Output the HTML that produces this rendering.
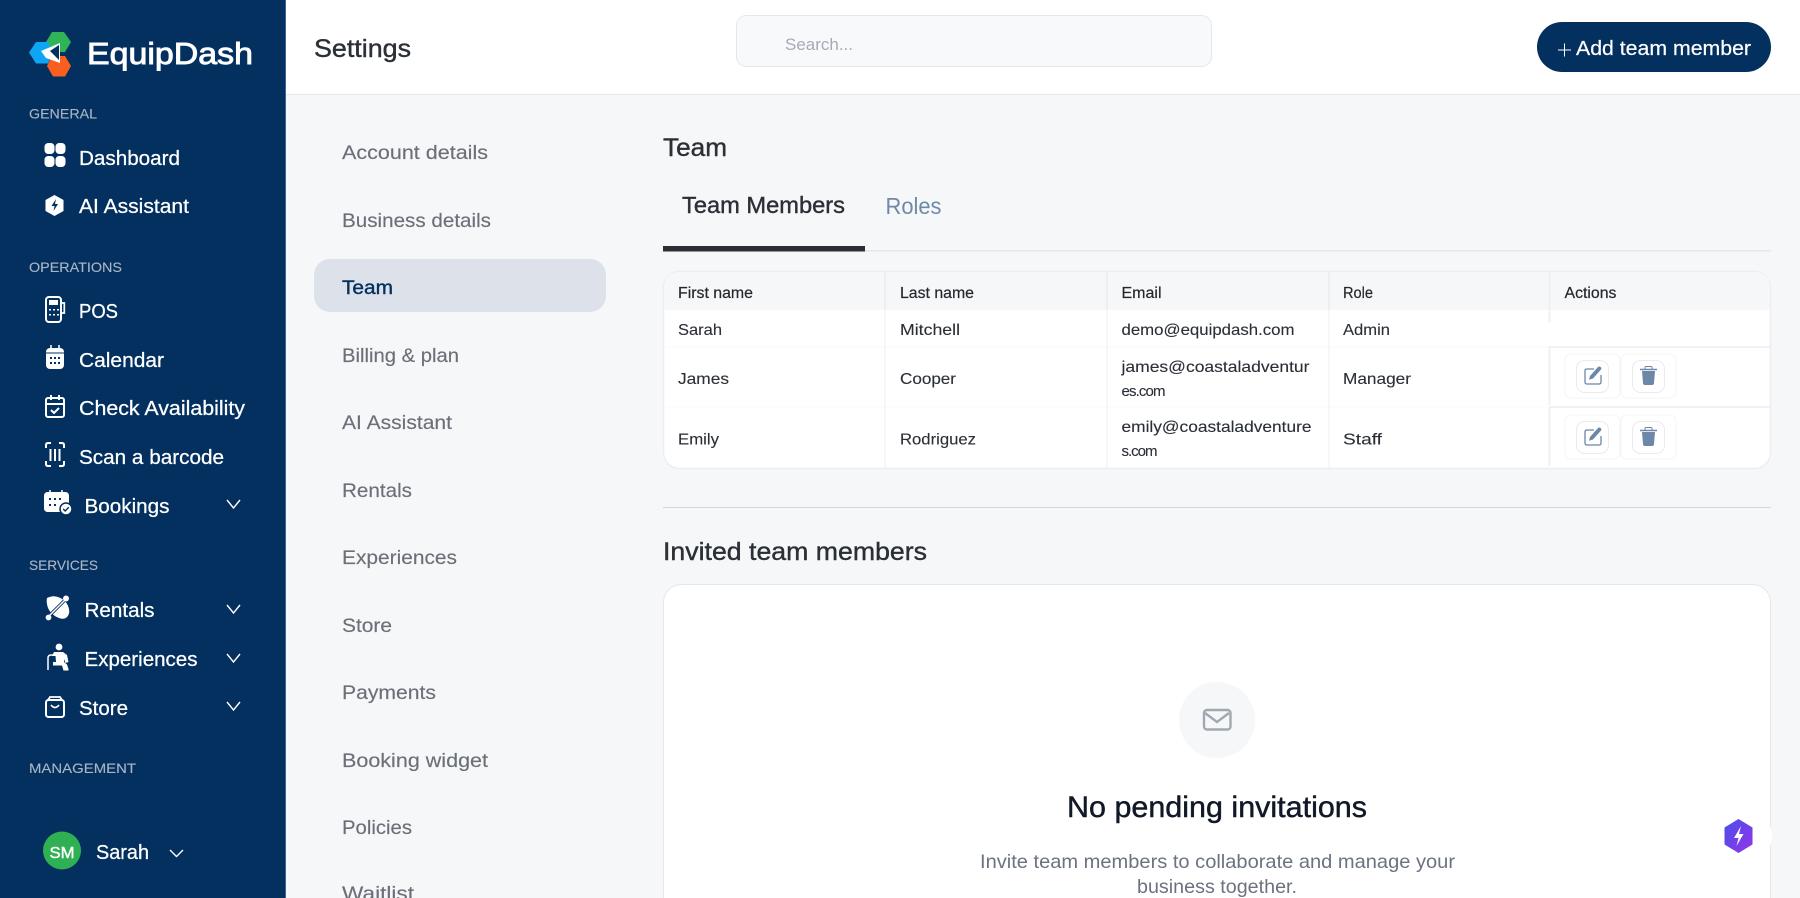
<!DOCTYPE html>
<html><head><meta charset="utf-8"><title>Settings - Team</title>
<style>
html,body{margin:0;padding:0;width:1800px;height:898px;overflow:hidden;background:#f6f7f9}
svg{display:block}
text{font-family:"Liberation Sans",Arial,sans-serif;white-space:pre}
.nav{font-size:20px;fill:#fff;stroke:#fff;stroke-width:.25}
.sec{font-size:14px;fill:#aab6c6;stroke:#aab6c6;stroke-width:.12}
.menu{font-size:19.5px;fill:#6b7078;stroke:#6b7078;stroke-width:.15}
.h{font-size:25px;fill:#2b2f36;stroke:#2b2f36;stroke-width:.4}
.th{font-size:15.5px;fill:#25282e;stroke:#25282e;stroke-width:.2}
.td{font-size:16px;fill:#2b2f36;stroke:#2b2f36;stroke-width:.12}
</style></head><body>
<svg width="1800" height="898" viewBox="0 0 1800 898" xmlns="http://www.w3.org/2000/svg">
<defs><linearGradient id="g" x1="0" y1="0" x2="1" y2="1"><stop offset="0" stop-color="#4a50ea"/><stop offset="1" stop-color="#9333ea"/></linearGradient></defs>
<rect width="1800" height="898" fill="#f6f7f9"/>
<!-- header -->
<rect x="285" width="1515" height="94" fill="#fff"/>
<rect x="285" y="94" width="1515" height="1" fill="#e5e7eb"/>
<text class="h" x="314" y="57" textLength="97" lengthAdjust="spacingAndGlyphs">Settings</text>
<rect x="736.500" y="15.500" width="475" height="51" rx="10" fill="#f8f9fb" stroke="#e5e7eb"/>
<text x="785" y="50" font-size="16.500" fill="#a5abb5" textLength="68" lengthAdjust="spacingAndGlyphs">Search...</text>
<rect x="1537" y="22" width="234" height="50" rx="25" fill="#03305f"/>
<path d="M1558 50h13M1564.500 43.500v13" stroke="#fff" stroke-width="1"/>
<text x="1576" y="55" font-size="20" fill="#fff" stroke="#fff" stroke-width=".2" textLength="175" lengthAdjust="spacingAndGlyphs">Add team member</text>
<!-- sidebar -->
<rect width="285" height="898" fill="#03305f"/>
<rect x="285" width="1" height="898" fill="#3f6596"/>
<path d="M52 32h12l7 10-6 10H52l-6-10z" fill="#2fb457"/>
<path d="M36 42h12l5 10.500-5 11H36l-7-11z" fill="#0ea5f5"/>
<path d="M52 56h13l6 10-6 10.500H53l-6-10.500z" fill="#fb5f20"/>
<path d="M41 51l19-8v20l-14-5z" fill="#fff"/>
<path d="M50 51l9-6v15z" fill="#03305f"/>
<text x="87" y="64" font-size="31" fill="#fff" stroke="#fff" stroke-width=".9" textLength="166" lengthAdjust="spacingAndGlyphs">EquipDash</text>
<text class="sec" x="29" y="118.500" textLength="68" lengthAdjust="spacingAndGlyphs">GENERAL</text>
<text class="sec" x="29" y="272" textLength="93" lengthAdjust="spacingAndGlyphs">OPERATIONS</text>
<text class="sec" x="29" y="570" textLength="69" lengthAdjust="spacingAndGlyphs">SERVICES</text>
<text class="sec" x="29" y="773" textLength="107" lengthAdjust="spacingAndGlyphs">MANAGEMENT</text>
<text class="nav" x="79" y="165" textLength="101" lengthAdjust="spacingAndGlyphs">Dashboard</text>
<text class="nav" x="79" y="213" textLength="110" lengthAdjust="spacingAndGlyphs">AI Assistant</text>
<text class="nav" x="79" y="318" textLength="39" lengthAdjust="spacingAndGlyphs">POS</text>
<text class="nav" x="79" y="367" textLength="85" lengthAdjust="spacingAndGlyphs">Calendar</text>
<text class="nav" x="79" y="415" textLength="166" lengthAdjust="spacingAndGlyphs">Check Availability</text>
<text class="nav" x="79" y="464" textLength="145" lengthAdjust="spacingAndGlyphs">Scan a barcode</text>
<text class="nav" x="84.500" y="513" textLength="85" lengthAdjust="spacingAndGlyphs">Bookings</text>
<text class="nav" x="84.500" y="617" textLength="70" lengthAdjust="spacingAndGlyphs">Rentals</text>
<text class="nav" x="84.500" y="666" textLength="113" lengthAdjust="spacingAndGlyphs">Experiences</text>
<text class="nav" x="79" y="715" textLength="49" lengthAdjust="spacingAndGlyphs">Store</text>
<!-- sidebar icons -->
<g fill="#fff"><rect x="44.500" y="143" width="10" height="11" rx="3.800"/><rect x="55.500" y="143" width="10" height="11" rx="3.800"/><rect x="44.500" y="156" width="10" height="11" rx="3.800"/><rect x="55.500" y="156" width="10" height="11" rx="3.800"/></g>
<path d="M54.500 195l9 5v11l-9 5-9-5v-11z" fill="#fff"/><path d="M56 199l-4.500 7h3l-1 5 4.500-7h-3z" fill="#03305f"/>
<g fill="none" stroke="#fff" stroke-width="2">
<rect x="46" y="297" width="15" height="25" rx="3"/><path d="M62 303h2.300v10h-2.300" stroke-width="1.700"/>
<rect x="49" y="300" width="9" height="5" fill="#fff" stroke="none"/>
<rect x="46" y="398" width="18" height="19" rx="2"/><path d="M46 404h18M51 395v5M59 395v5M51 410l3 3 5-5"/>
<path d="M51 443h-3q-2 0-2 2v3M59 443h3q2 0 2 2v3M51 466h-3q-2 0-2-2v-3M59 466h3q2 0 2-2v-3M50.500 449v12M55 449v12M59.500 449v12"/>
<rect x="46" y="700" width="18" height="17" rx="2.500"/><path d="M48 700l2-3h10l2 3M51 705q4 5 8 0" stroke-width="1.800"/>
</g>
<g fill="#fff"><rect x="49" y="309" width="2" height="1.500"/><rect x="53" y="309" width="2" height="1.500"/><rect x="57" y="309" width="2" height="1.500"/><rect x="49" y="314" width="2" height="1.500"/><rect x="53" y="314" width="2" height="1.500"/><rect x="57" y="314" width="2" height="1.500"/></g>
<rect x="46" y="348" width="18" height="21" rx="4" fill="#fff"/><path d="M51 345v5M59 345v5" stroke="#fff" stroke-width="1.500"/><path d="M46 353h18" stroke="#03305f"/>
<g fill="#03305f"><rect x="50" y="357" width="2" height="2"/><rect x="54" y="357" width="2" height="2"/><rect x="58" y="357" width="2" height="2"/><rect x="50" y="362" width="2" height="2"/><rect x="54" y="362" width="2" height="2"/><rect x="58" y="362" width="2" height="2"/></g>
<!-- bookings icon -->
<rect x="44" y="492" width="25" height="20" rx="3.500" fill="#fff"/><path d="M50 490v4M62 490v4" stroke="#fff" stroke-width="1.500"/>
<g fill="#03305f"><rect x="49" y="498" width="2" height="2"/><rect x="54" y="498" width="2" height="2"/><rect x="59" y="498" width="2" height="2"/><rect x="49" y="504" width="2" height="2"/><rect x="54" y="504" width="2" height="2"/></g>
<circle cx="66" cy="509" r="6" fill="#fff" stroke="#03305f" stroke-width="1.500"/><path d="M63.200 509l2 2 3.600-3.800" fill="none" stroke="#03305f" stroke-width="1.400"/>
<!-- rentals icon -->
<path d="M47 598q6-3 11-1 9 3 11 12 1 5-2 8-3 3-8 1-8-3-11-10-2-6-1-10z" fill="#fff"/>
<path d="M47 618l20-20" stroke="#03305f" stroke-width="3.200"/>
<path d="M49 616l17-17" stroke="#fff" stroke-width="1.400"/>
<circle cx="48.500" cy="617.500" r="2.900" fill="#fff"/><circle cx="66" cy="598.500" r="3" fill="#fff"/>
<!-- experiences icon -->
<circle cx="59" cy="647" r="3.400" fill="#fff"/>
<path d="M54 652h9l4 3 1.500 7-3 1-1.500-4v3l3 2.500 1.500 4.500v1.500h-5l-1.500-5H53v-3.500h3l-.5-6H52z" fill="#fff"/>
<path d="M48 670v-12q0-3 3-3h3" fill="none" stroke="#fff" stroke-width="1.500"/>
<!-- chevrons -->
<g fill="none" stroke="#fff" stroke-width="1.400"><path d="M227 500l6.500 8 6.500-8M227 605l6.500 8 6.500-8M227 654l6.500 8 6.500-8M227 702l6.500 8 6.500-8M170 850l6.500 6.500 6.500-6.500"/></g>
<circle cx="62" cy="850.500" r="19" fill="#2fb153"/>
<text x="49.500" y="858" font-size="16" fill="#fff" stroke="#fff" stroke-width=".4" textLength="25" lengthAdjust="spacingAndGlyphs">SM</text>
<text class="nav" x="96" y="859" textLength="53" lengthAdjust="spacingAndGlyphs">Sarah</text>
<!-- settings menu -->
<rect x="314" y="259" width="292" height="53" rx="16" fill="#dde2ea"/>
<text class="menu" x="342" y="159" textLength="146" lengthAdjust="spacingAndGlyphs">Account details</text>
<text class="menu" x="342" y="227" textLength="149" lengthAdjust="spacingAndGlyphs">Business details</text>
<text x="342" y="294" font-size="19.500" fill="#03305f" stroke="#03305f" stroke-width=".4" textLength="51" lengthAdjust="spacingAndGlyphs">Team</text>
<text class="menu" x="342" y="362" textLength="117" lengthAdjust="spacingAndGlyphs">Billing &amp; plan</text>
<text class="menu" x="342" y="429" textLength="110" lengthAdjust="spacingAndGlyphs">AI Assistant</text>
<text class="menu" x="342" y="497" textLength="70" lengthAdjust="spacingAndGlyphs">Rentals</text>
<text class="menu" x="342" y="564" textLength="115" lengthAdjust="spacingAndGlyphs">Experiences</text>
<text class="menu" x="342" y="632" textLength="50" lengthAdjust="spacingAndGlyphs">Store</text>
<text class="menu" x="342" y="699" textLength="94" lengthAdjust="spacingAndGlyphs">Payments</text>
<text class="menu" x="342" y="767" textLength="146" lengthAdjust="spacingAndGlyphs">Booking widget</text>
<text class="menu" x="342" y="834" textLength="70" lengthAdjust="spacingAndGlyphs">Policies</text>
<text class="menu" x="342" y="900" textLength="72" lengthAdjust="spacingAndGlyphs">Waitlist</text>
<!-- team -->
<text class="h" x="663" y="156" textLength="64" lengthAdjust="spacingAndGlyphs">Team</text>
<text x="682" y="213" font-size="23" fill="#2b2f36" stroke="#2b2f36" stroke-width=".4" textLength="163" lengthAdjust="spacingAndGlyphs">Team Members</text>
<text x="885.500" y="214" font-size="23" fill="#6f8aa8" textLength="56" lengthAdjust="spacingAndGlyphs">Roles</text>
<rect x="663" y="250" width="1108" height="1.500" fill="#e5e7eb"/>
<rect x="663" y="246" width="202" height="5.500" fill="#2b2e34"/>
<!-- table -->
<rect x="663.500" y="271.500" width="1107" height="197" rx="16" fill="#fff" stroke="#eceef1" stroke-width="1.500"/>
<path d="M664 310v-22q0-16 16-16h1074q16 0 16 16v22z" fill="#f6f7f9"/>
<path d="M664 347h885M664 407h885" stroke="#f8f8f9"/>
<path d="M1549 347h221M1549 407h221" stroke="#f0f1f3" stroke-width="2"/>
<path d="M885 272v38M1107 272v38M1329 272v38" stroke="#eceef0" stroke-width="2"/>
<path d="M885 310v158M1107 310v158M1329 310v158" stroke="#f1f2f4" stroke-width="1.200"/>
<path d="M1549.500 272v51M1549.500 347v58M1549.500 407v59" stroke="#eff0f2" stroke-width="2"/>
<text class="th" x="678" y="298" textLength="75" lengthAdjust="spacingAndGlyphs">First name</text>
<text class="th" x="900" y="298" textLength="74" lengthAdjust="spacingAndGlyphs">Last name</text>
<text class="th" x="1121.500" y="298" textLength="40" lengthAdjust="spacingAndGlyphs">Email</text>
<text class="th" x="1343" y="298" textLength="30" lengthAdjust="spacingAndGlyphs">Role</text>
<text class="th" x="1564.500" y="298" textLength="52" lengthAdjust="spacingAndGlyphs">Actions</text>
<text class="td" x="678" y="335" textLength="44" lengthAdjust="spacingAndGlyphs">Sarah</text>
<text class="td" x="900" y="335" textLength="60" lengthAdjust="spacingAndGlyphs">Mitchell</text>
<text class="td" x="1121.500" y="335" textLength="173" lengthAdjust="spacingAndGlyphs">demo@equipdash.com</text>
<text class="td" x="1343" y="335" textLength="47" lengthAdjust="spacingAndGlyphs">Admin</text>
<text class="td" x="678" y="384" textLength="51" lengthAdjust="spacingAndGlyphs">James</text>
<text class="td" x="900" y="384" textLength="56" lengthAdjust="spacingAndGlyphs">Cooper</text>
<text class="td" x="1121.500" y="372" textLength="188" lengthAdjust="spacingAndGlyphs">james@coastaladventur</text>
<text class="td" x="1121.500" y="396" style="font-size:15px" textLength="44" lengthAdjust="spacing">es.com</text>
<text class="td" x="1343" y="384" textLength="68" lengthAdjust="spacingAndGlyphs">Manager</text>
<text class="td" x="678" y="444.500" textLength="41" lengthAdjust="spacingAndGlyphs">Emily</text>
<text class="td" x="900" y="444.500" textLength="76" lengthAdjust="spacingAndGlyphs">Rodriguez</text>
<text class="td" x="1121.500" y="432" textLength="190" lengthAdjust="spacingAndGlyphs">emily@coastaladventure</text>
<text class="td" x="1121.500" y="456" style="font-size:15px" textLength="36" lengthAdjust="spacing">s.com</text>
<text class="td" x="1343" y="444.500" textLength="39" lengthAdjust="spacingAndGlyphs">Staff</text>
<g>
<rect x="1565" y="354" width="55" height="44" rx="6" fill="#fff" stroke="#f3f4f6"/><rect x="1621" y="354" width="55" height="44" rx="6" fill="#fff" stroke="#f3f4f6"/>
<rect x="1576.500" y="360.500" width="32" height="32" rx="8" fill="#fff" stroke="#e9ebee"/><rect x="1632.500" y="360.500" width="32" height="32" rx="8" fill="#fff" stroke="#e9ebee"/>
<path d="M1594 369h-7q-2 0-2 2v11q0 2 2 2h12q2 0 2-2v-7" fill="none" stroke="#6c87a7" stroke-width="1.300"/>
<path d="M1590 376l8-9q1-1 2.500 0t.5 2.500l-8 9-4 1.300z" fill="#6c87a7"/>
<path d="M1640 369.500h17" stroke="#6c87a7" stroke-width="1.400"/><path d="M1645 369v-1.500q0-1 1-1h5q1 0 1 1v1.500" fill="none" stroke="#6c87a7"/>
<path d="M1642 371h13l-1 12q0 2-2 2h-7q-2 0-2-2z" fill="#6c87a7"/>
</g>
<g transform="translate(0,61)">
<rect x="1565" y="354" width="55" height="44" rx="6" fill="#fff" stroke="#f3f4f6"/><rect x="1621" y="354" width="55" height="44" rx="6" fill="#fff" stroke="#f3f4f6"/>
<rect x="1576.500" y="360.500" width="32" height="32" rx="8" fill="#fff" stroke="#e9ebee"/><rect x="1632.500" y="360.500" width="32" height="32" rx="8" fill="#fff" stroke="#e9ebee"/>
<path d="M1594 369h-7q-2 0-2 2v11q0 2 2 2h12q2 0 2-2v-7" fill="none" stroke="#6c87a7" stroke-width="1.300"/>
<path d="M1590 376l8-9q1-1 2.500 0t.5 2.500l-8 9-4 1.300z" fill="#6c87a7"/>
<path d="M1640 369.500h17" stroke="#6c87a7" stroke-width="1.400"/><path d="M1645 369v-1.500q0-1 1-1h5q1 0 1 1v1.500" fill="none" stroke="#6c87a7"/>
<path d="M1642 371h13l-1 12q0 2-2 2h-7q-2 0-2-2z" fill="#6c87a7"/>
</g>
<!-- invited -->
<rect x="663" y="507" width="1108" height="1" fill="#d3d6da"/>
<text class="h" x="663" y="560" textLength="264" lengthAdjust="spacingAndGlyphs">Invited team members</text>
<rect x="663.500" y="584.500" width="1107" height="340" rx="18" fill="#fff" stroke="#e5e7eb"/>
<circle cx="1217" cy="720" r="38" fill="#f6f7f9"/>
<rect x="1204" y="710" width="26.500" height="19.500" rx="3" fill="none" stroke="#a2a8b2" stroke-width="2.400"/>
<path d="M1205 713l12 9 12-9" fill="none" stroke="#a2a8b2" stroke-width="2.400"/>
<text x="1067" y="817" font-size="30" fill="#111827" stroke="#111827" stroke-width=".45" textLength="300" lengthAdjust="spacingAndGlyphs">No pending invitations</text>
<text x="980" y="868" font-size="19.500" fill="#6b7280" textLength="475" lengthAdjust="spacingAndGlyphs">Invite team members to collaborate and manage your</text>
<text x="1137" y="893" font-size="19.500" fill="#6b7280" textLength="160" lengthAdjust="spacingAndGlyphs">business together.</text>
<circle cx="1748" cy="836" r="24" fill="#fff"/>
<path d="M1738.500 819l14 8.500v17l-14 8.500-14-8.500v-17z" fill="url(#g)"/>
<path d="M1741 826l-7 12h4.500l-2 8 7-12h-4.500z" fill="#fff"/>
</svg>
</body></html>
